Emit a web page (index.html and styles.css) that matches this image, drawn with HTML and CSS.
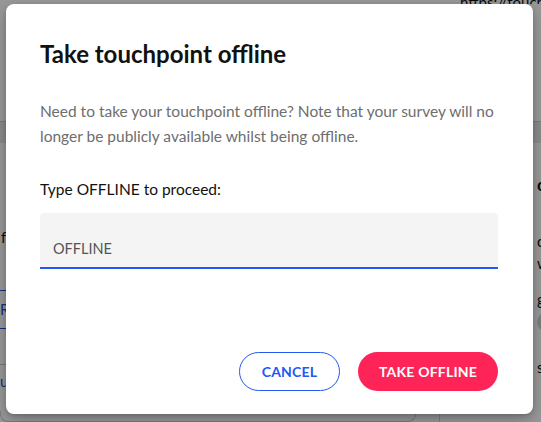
FILE: index.html
```html
<!DOCTYPE html>
<html lang="en">
<head>
<meta charset="utf-8">
<title>Take touchpoint offline</title>
<link rel="stylesheet" href="styles.css">
</head>
<body>
<div class="page">
  <div class="page-top">
    <span class="page-url">https://touch</span>
  </div>
  <div class="page-band"></div>
  <div class="page-body">
    <div class="page-main">
      <div class="pm-f">f</div>
      <div class="pm-link">R</div>
      <div class="pm-link2">u</div>
      <div class="pm-card"></div>
    </div>
    <div class="page-side">
      <div class="ps-c">c</div>
      <div class="ps-o">o<br>w</div>
      <div class="ps-g">g</div>
      <div class="ps-pill"></div>
      <div class="ps-s">s</div>
    </div>
  </div>
</div>
<div class="overlay"></div>
<div class="modal" role="dialog" aria-labelledby="modal-title">
  <h2 class="modal-title" id="modal-title">Take touchpoint offline</h2>
  <p class="modal-text">Need to take your touchpoint offline? Note that your survey will no longer be publicly available whilst being offline.</p>
  <label class="field-label" for="confirm">Type OFFLINE to proceed:</label>
  <div class="field">
    <span class="field-value" id="confirm">OFFLINE</span>
  </div>
  <div class="modal-actions">
    <button class="btn btn-outline" type="button">CANCEL</button>
    <button class="btn btn-danger" type="button">TAKE OFFLINE</button>
  </div>
</div>
</body>
</html>
```
FILE: styles.css
```css
html, body {
  margin: 0;
  padding: 0;
  width: 541px;
  height: 422px;
  overflow: hidden;
}
body {
  font-family: "Lato", "Noto Sans", sans-serif;
  background: #ffffff;
  position: relative;
}

/* background page (dimmed) */
.page {
  width: 541px;
  height: 422px;
  display: flex;
  flex-direction: column;
  color: #111;
  font-size: 15px;
  line-height: 18px;
}
.page-top {
  height: 122px;
  border-bottom: 1px solid #cfcfcf;
  display: flex;
  justify-content: flex-end;
  box-sizing: border-box;
  overflow: hidden;
}
.page-url {
  margin-top: -7px;
  width: 81px;
  white-space: nowrap;
  font-size: 15px;
  line-height: 18px;
  height: 11px;
  overflow: hidden;
}
.page-band {
  height: 21px;
  background: #e9e9e9;
}
.page-body {
  flex: 1;
  display: grid;
  grid-template-columns: 440px 1fr;
}
.page-main {
  border-right: 1px solid #d6d6d6;
  display: flex;
  flex-direction: column;
}
.pm-f { margin-top: 85px; margin-left: 1px; }
.pm-link {
  margin-top: 44px;
  border-top: 1px solid #2a4fd8;
  border-bottom: 1px solid #2a4fd8;
  height: 37px;
  line-height: 37px;
  color: #2a4fd8;
}
.pm-link2 {
  margin-top: 35px;
  border-top: 1px solid #c8c8d8;
  padding-top: 7px;
  color: #2a4fd8;
}
.pm-card {
  margin-top: auto;
  margin-right: 23px;
  height: 10px;
  border: 1px solid #cfcfcf;
  border-top: none;
  border-radius: 0 0 8px 8px;
}
.page-side { padding-left: 97px; }
.ps-c { margin-top: 33px; font-weight: 700; font-size: 17px; }
.ps-o { margin-top: 36px; line-height: 22px; }
.ps-g { margin-top: 16px; }
.ps-pill { margin-top: 4px; height: 20px; border-radius: 10px; background: #d4d4d4; width: 60px; }
.ps-s { margin-top: 26px; }

.overlay {
  position: absolute;
  inset: 0;
  background: rgba(0, 0, 0, 0.4);
}

/* modal */
.modal {
  position: absolute;
  left: 6px;
  top: 4px;
  width: 527px;
  height: 410px;
  box-sizing: border-box;
  padding: 35px 35px 23px 34px;
  background: #ffffff;
  border-radius: 8px;
  box-shadow: 0 6px 18px rgba(0, 0, 0, 0.25), 0 2px 4px rgba(0, 0, 0, 0.15);
  display: flex;
  flex-direction: column;
}
.modal-title {
  margin: 0;
  font-size: 24px;
  line-height: 30px;
  font-weight: 700;
  color: #111111;
}
.modal-text {
  margin: 30px 0 0;
  font-size: 15.5px;
  line-height: 25px;
  color: #6e6e6e;
}
.field-label {
  margin-top: 30px;
  font-size: 15.5px;
  line-height: 20px;
  color: #111111;
}
.field {
  margin-top: 14px;
  background: #f4f4f4;
  border-radius: 4px 4px 0 0;
  border-bottom: 2px solid #2457f5;
  padding: 26px 11px 8px 13px;
  display: flex;
}
.field-value {
  font-size: 14.5px;
  line-height: 20px;
  color: #555555;
}
.modal-actions {
  margin-top: auto;
  display: flex;
  justify-content: flex-end;
  gap: 18px;
}
.btn {
  height: 39px;
  border-radius: 20px;
  font-family: inherit;
  font-size: 14px;
  font-weight: 700;
  letter-spacing: 0.2px;
  box-sizing: border-box;
  padding: 0;
  cursor: pointer;
}
.btn-outline {
  width: 101px;
  background: #ffffff;
  color: #2457f5;
  border: 1px solid #2457f5;
}
.btn-danger {
  width: 140px;
  background: #ff2457;
  color: #ffffff;
  border: none;
}
```
